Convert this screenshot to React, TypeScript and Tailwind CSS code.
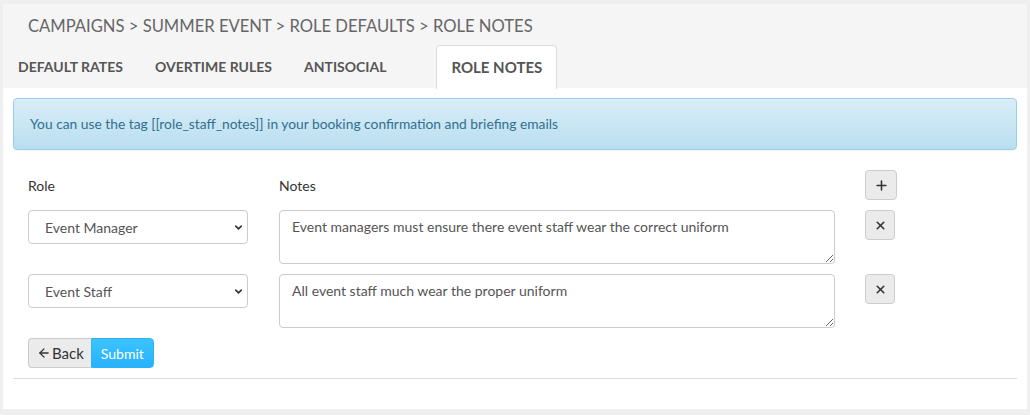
import { Plus, X, ArrowLeft, ChevronDown } from "lucide-react";

const font = { fontFamily: "Lato, 'Noto Sans', sans-serif" };

const tabs = ["Default Rates", "Overtime Rules", "Antisocial"];

const rows = [
  {
    role: "Event Manager",
    note: "Event managers must ensure there event staff wear the correct uniform",
  },
  { role: "Event Staff", note: "All event staff much wear the proper uniform" },
];

function RoleSelect({ value }: { value: string }) {
  return (
    <div className="relative w-[220px]">
      <select
        defaultValue={value}
        className="h-[34px] w-full appearance-none rounded border border-[#ccc] bg-white pl-4 pr-8 text-[14px] text-[#555] outline-none"
      >
        <option>Event Manager</option>
        <option>Event Staff</option>
      </select>
      <ChevronDown
        className="pointer-events-none absolute right-[4px] top-[12px] size-[11px] text-[#333]"
        strokeWidth={3.5}
      />
    </div>
  );
}

export default function App() {
  return (
    <div className="h-[415px] w-[1030px] bg-[#efefef] pl-[3px] pt-[4px]" style={font}>
      <div className="w-[1024px] bg-white">
        <div className="bg-[#f5f5f5]">
          <div className="pl-[25px] pt-[10px] text-[16.6px] uppercase leading-[24px] text-[#666]">
            Campaigns &gt; Summer Event &gt; Role Defaults &gt; Role Notes
          </div>
          <div className="mt-[7px] flex gap-[2px]">
            {tabs.map((t) => (
              <div
                key={t}
                className="border border-transparent px-[14px] pb-[10px] pt-[11px] text-[14px] font-bold uppercase leading-[20px] text-[#555]"
              >
                {t}
              </div>
            ))}
            <div className="-mb-px ml-[33px] rounded-t border border-b-0 border-[#ddd] bg-white px-[14px] pb-[11px] pt-[11px] text-[15px] font-bold uppercase leading-[20px] text-[#555]">
              Role Notes
            </div>
          </div>
        </div>
        <div className="px-[10px] pt-[10px]">
          <div className="rounded border border-[#9acfea] bg-gradient-to-b from-[#d9edf7] to-[#b9def0] px-[16px] py-[15px] text-[13.8px] leading-[20px] text-[#31708f] shadow-[inset_0_1px_0_rgba(255,255,255,0.25),0_1px_2px_rgba(0,0,0,0.05)]">
            You can use the tag [[role_staff_notes]] in your booking confirmation and briefing emails
          </div>
          <div className="px-[15px] pt-[20px] text-[14px] text-[#333]">
            <div className="flex items-center">
              <div className="w-[220px]">Role</div>
              <div className="ml-[31px] w-[556px]">Notes</div>
              <button className="ml-[30px] flex h-[30px] w-[32px] items-center justify-center rounded border border-[#ccc] bg-[#ebebeb] text-[#333]">
                <Plus className="size-[15px]" strokeWidth={2.5} />
              </button>
            </div>
            {rows.map((r) => (
              <div key={r.role} className="mt-[10px] flex items-start">
                <RoleSelect value={r.role} />
                <textarea
                  defaultValue={r.note}
                  className="ml-[31px] h-[54px] w-[556px] rounded border border-[#ccc] px-[12px] py-[6px] text-[14px] leading-[20px] text-[#555] outline-none"
                />
                <button className="ml-[30px] flex h-[30px] w-[30px] items-center justify-center rounded border border-[#ccc] bg-[#ebebeb] text-[#333]">
                  <X className="size-[13px]" strokeWidth={3} />
                </button>
              </div>
            ))}
            <div className="mt-[10px] flex">
              <button className="flex h-[30px] items-center gap-[1px] rounded-l border border-r-0 border-[#ccc] bg-[#ebebeb] pl-[8px] pr-[7px] text-[15px] text-[#333]">
                <ArrowLeft className="size-[14px]" strokeWidth={2.2} />
                Back
              </button>
              <button className="h-[30px] rounded-r border border-[#2eb3f7] bg-gradient-to-b from-[#3cc3ff] to-[#29b1fb] px-[9px] text-[14px] text-white">
                Submit
              </button>
            </div>
          </div>
          <div className="mt-[10px] border-t border-[#ddd]" />
          <div className="h-[30px]" />
        </div>
      </div>
    </div>
  );
}
